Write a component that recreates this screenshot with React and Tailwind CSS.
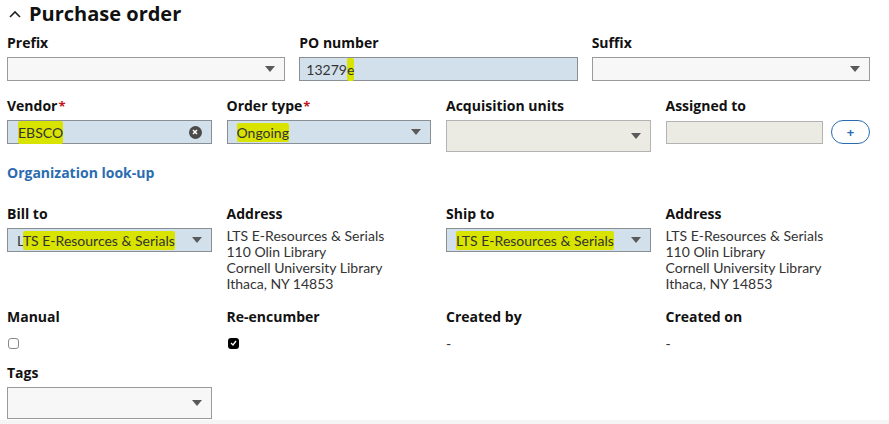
import React from "react";

const labelFont = { fontFamily: '"Open Sans", "Noto Sans", sans-serif' };
const valueFont = { fontFamily: 'Lato, "Noto Sans", sans-serif' };

// highlighter mark over a value
const Mark = ({ children }) => (
  <span className="bg-[#d8e300] rounded-[2px] py-[1px]">{children}</span>
);

const Label = ({ children, required }) => (
  <div className="text-[14px] font-bold text-[#111] leading-[20px] mb-[4px]" style={labelFont}>
    {children}
    {required && <span className="text-[#c4141b] ml-[1px] align-top text-[13px]">*</span>}
  </div>
);

const Caret = () => (
  <svg width="10" height="6" viewBox="0 0 10 6" className="shrink-0">
    <path d="M0 0 L10 0 L5 6 Z" fill="#5a5a5a" />
  </svg>
);

const Select = ({ value, tone = "empty", tall }) => {
  const tones = {
    empty: "bg-[#f7f7f7] border-[#9a9a9a]",
    filled: "bg-[#d2e0ec] border-[#8a8f96]",
    disabled: "bg-[#ebebe4] border-[#b3b3b3]",
  };
  return (
    <div
      className={`flex items-center justify-between border px-[9px] text-[14px] text-[#333] ${tones[tone]} ${tall ? "h-[32px]" : "h-[24px]"}`}
      style={valueFont}
    >
      <span className="truncate">{value}</span>
      <Caret />
    </div>
  );
};

const Checkbox = ({ checked }) =>
  checked ? (
    <span className="inline-flex items-center justify-center w-[11px] h-[11px] rounded-[3px] bg-black">
      <svg width="7" height="6" viewBox="0 0 7 6">
        <path d="M1 3 L3 5 L6 1" stroke="#fff" strokeWidth="1.3" fill="none" />
      </svg>
    </span>
  ) : (
    <span className="inline-block w-[11px] h-[11px] rounded-[3px] border border-[#888] bg-white" />
  );

const Address = () => (
  <div className="text-[14px] leading-[16px] text-[#333]" style={valueFont}>
    <div>LTS E-Resources &amp; Serials</div>
    <div>110 Olin Library</div>
    <div>Cornell University Library</div>
    <div>Ithaca, NY 14853</div>
  </div>
);

export default function App() {
  return (
    <div className="w-[889px] h-[424px] bg-white overflow-hidden flex flex-col">
      <div className="pl-[7px] pr-[19px] flex-1">
        {/* section header */}
        <div className="flex items-center gap-[8px] h-[28px] pl-[2px]">
          <svg width="12" height="8" viewBox="0 0 12 8">
            <path d="M1 7 L6 2 L11 7" stroke="#222" strokeWidth="1.6" fill="none" />
          </svg>
          <span className="text-[20px] font-bold text-[#111]" style={labelFont}>
            Purchase order
          </span>
        </div>

        {/* prefix / number / suffix */}
        <div className="grid grid-cols-3 gap-x-[14px] mt-[5px]">
          <div>
            <Label>Prefix</Label>
            <Select value="" />
          </div>
          <div>
            <Label>PO number</Label>
            <div
              className="h-[24px] flex items-center border border-[#8a8f96] bg-[#d2e0ec] px-[6px] text-[14px] text-[#333]"
              style={valueFont}
            >
              13279<Mark>e</Mark>
            </div>
          </div>
          <div>
            <Label>Suffix</Label>
            <Select value="" />
          </div>
        </div>

        {/* vendor row */}
        <div className="grid grid-cols-4 gap-x-[15px] mt-[15px]">
          <div>
            <Label required>Vendor</Label>
            <div
              className="h-[24px] flex items-center justify-between border border-[#8a8f96] bg-[#d2e0ec] pl-[10px] pr-[9px] text-[14px] text-[#333]"
              style={valueFont}
            >
              <Mark>EBSCO</Mark>
              <span className="w-[13px] h-[13px] rounded-full bg-[#4a4a4a] inline-flex items-center justify-center">
                <svg width="6" height="6" viewBox="0 0 6 6">
                  <path d="M1 1 L5 5 M5 1 L1 5" stroke="#fff" strokeWidth="1.5" />
                </svg>
              </span>
            </div>
            <div className="mt-[18px] text-[14px] leading-[21px] font-bold text-[#2b6cb0]" style={labelFont}>
              Organization look-up
            </div>
          </div>
          <div>
            <Label required>Order type</Label>
            <Select value={<Mark>Ongoing</Mark>} tone="filled" />
          </div>
          <div>
            <Label>Acquisition units</Label>
            <Select value="" tone="disabled" tall />
          </div>
          <div>
            <Label>Assigned to</Label>
            <div className="flex items-center gap-[8px]">
              <div className="h-[23px] flex-1 border border-[#b3b3b3] bg-[#ebebe4]" />
              <button className="w-[39px] h-[24px] rounded-full border border-[#2b6cb0] text-[#2b6cb0] text-[13px] font-bold leading-none flex items-center justify-center">
                +
              </button>
            </div>
          </div>
        </div>

        {/* bill / ship */}
        <div className="grid grid-cols-4 gap-x-[15px] mt-[21px]">
          <div>
            <Label>Bill to</Label>
            <Select value={<>L<Mark>TS E-Resources &amp; Serials</Mark></>} tone="filled" />
          </div>
          <div>
            <Label>Address</Label>
            <Address />
          </div>
          <div>
            <Label>Ship to</Label>
            <Select value={<Mark>LTS E-Resources &amp; Serials</Mark>} tone="filled" />
          </div>
          <div>
            <Label>Address</Label>
            <Address />
          </div>
        </div>

        {/* flags */}
        <div className="grid grid-cols-4 gap-x-[15px] mt-[15px]">
          <div>
            <Label>Manual</Label>
            <div className="h-[24px] flex items-center pl-[1px]">
              <Checkbox />
            </div>
          </div>
          <div>
            <Label>Re-encumber</Label>
            <div className="h-[24px] flex items-center pl-[1px]">
              <Checkbox checked />
            </div>
          </div>
          <div>
            <Label>Created by</Label>
            <div className="h-[24px] flex items-center text-[14px] text-[#333]" style={valueFont}>-</div>
          </div>
          <div>
            <Label>Created on</Label>
            <div className="h-[24px] flex items-center text-[14px] text-[#333]" style={valueFont}>-</div>
          </div>
        </div>

        <div className="grid grid-cols-4 gap-x-[15px] mt-[8px]">
          <div>
            <Label>Tags</Label>
            <Select value="" tall />
          </div>
        </div>
      </div>
      <div className="h-[4px] bg-[#f5f5f5]" />
    </div>
  );
}
